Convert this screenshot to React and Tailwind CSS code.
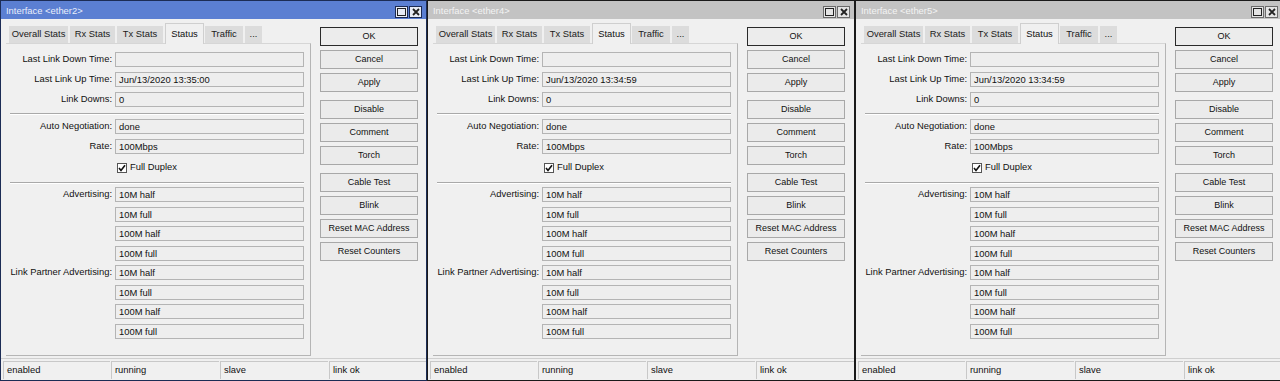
import React from "react";

const windows = [
  { title: "Interface <ether2>", up: "Jun/13/2020 13:35:00", active: true, w: "w-[427px]" },
  { title: "Interface <ether4>", up: "Jun/13/2020 13:34:59", w: "w-[428px]" },
  { title: "Interface <ether5>", up: "Jun/13/2020 13:34:59", w: "w-[428px]" },
];

const tabs = [
  { label: "Overall Stats", cls: "w-[59px] ml-[3px]" },
  { label: "Rx Stats", cls: "w-[45px] ml-[2px]" },
  { label: "Tx Stats", cls: "w-[46px] ml-[2px]" },
  { label: "Status", cls: "w-[39px] ml-[2px]", active: true },
  { label: "Traffic", cls: "w-[38px] ml-[1px]" },
  { label: "...", cls: "w-[17px] ml-[2px]" },
];

const buttons = [
  { label: "OK", def: true },
  { label: "Cancel" },
  { label: "Apply" },
  { label: "Disable", gap: true },
  { label: "Comment" },
  { label: "Torch" },
  { label: "Cable Test", gap: true },
  { label: "Blink" },
  { label: "Reset MAC Address" },
  { label: "Reset Counters" },
];

const speeds = ["10M half", "10M full", "100M half", "100M full"];

function Row({ label, value, className = "" }) {
  return (
    <div className={`flex h-[15px] items-center ${className}`}>
      <div className="w-[106px] text-right whitespace-nowrap">{label}</div>
      <div className="ml-[3px] h-[15px] w-[189px] border border-[#b4b4b4] bg-[#eeeeee] pl-[3px] leading-[13px] whitespace-nowrap">
        {value}
      </div>
    </div>
  );
}

function Sep({ className = "" }) {
  return <div className={`ml-[4px] w-[294px] border-t border-b border-t-[#a9a9a9] border-b-white ${className}`} />;
}

function TitleButtons({ active }) {
  const c = active ? "border-[#1b2a52] bg-[#e8ecf6]" : "border-[#6b6b6b] bg-[#e4e4e4]";
  return (
    <div className="flex gap-[1px]">
      <div className={`flex h-[12px] w-[13px] items-center justify-center border ${c}`}>
        <div className="h-[8px] w-[9px] border border-[#222]" />
      </div>
      <div className={`flex h-[12px] w-[13px] items-center justify-center border ${c}`}>
        <svg width="8" height="8" viewBox="0 0 8 8">
          <path d="M1 1 L7 7 M7 1 L1 7" stroke="#222" strokeWidth="1.8" />
        </svg>
      </div>
    </div>
  );
}

function Window({ title, up, active, w }) {
  return (
    <div
      className={`flex h-[381px] shrink-0 flex-col border bg-[#f0f0f0] ${w} ${
        active ? "border-[#1c2c55]" : "border-[#1a1a1a]"
      }`}
    >
      <div
        className={`flex h-[18px] items-center justify-between pl-[5px] pr-[4px] ${
          active ? "bg-[#5b7fd2] text-[#e9eefb]" : "bg-[#c3c3c3] text-[#f3f3f3]"
        }`}
      >
        <span className="pt-[3px]">{title}</span>
        <div className="pt-[4px]">
          <TitleButtons active={active} />
        </div>
      </div>

      <div className="flex pl-[5px]">
        <div className="w-[305px] pt-[4px]">
          <div className="flex h-[20px] items-end">
            {tabs.map((t) =>
              t.active ? (
                <div
                  key={t.label}
                  className={`relative z-10 -mb-[1px] flex h-[21px] items-start justify-center border border-b-0 border-[#cfcfcf] bg-[#f0f0f0] pt-[3px] ${t.cls}`}
                >
                  {t.label}
                </div>
              ) : (
                <div
                  key={t.label}
                  className={`flex h-[17px] items-center justify-center bg-[#dcdcdc] text-[#1a1a1a] ${t.cls}`}
                >
                  {t.label}
                </div>
              )
            )}
          </div>
          <div className="h-[313px] border-t border-r border-b border-t-[#d6d6d6] border-r-[#b5b5b5] border-b-[#b5b5b5] pt-[7.5px]">
            <Row label="Last Link Down Time:" value="" />
            <Row label="Last Link Up Time:" value={up} className="mt-[5px]" />
            <Row label="Link Downs:" value="0" className="mt-[5px]" />
            <Sep className="mt-[6.5px]" />
            <Row label="Auto Negotiation:" value="done" className="mt-[4px]" />
            <Row label="Rate:" value="100Mbps" className="mt-[5px]" />
            <div className="mt-[7px] flex h-[13px] items-center pl-[111px]">
              <div className="flex h-[10px] w-[10px] items-center justify-center border border-[#555] bg-white">
                <svg width="8" height="8" viewBox="0 0 8 8">
                  <path d="M1 4 L3 6.5 L7 1.2" fill="none" stroke="#111" strokeWidth="1.6" />
                </svg>
              </div>
              <span className="ml-[3px]">Full Duplex</span>
            </div>
            <Sep className="mt-[7.5px]" />
            {speeds.map((s, i) => (
              <Row
                key={"a" + s}
                label={i === 0 ? "Advertising:" : ""}
                value={s}
                className={i === 0 ? "mt-[3.5px]" : "mt-[4.5px]"}
              />
            ))}
            {speeds.map((s, i) => (
              <Row
                key={"p" + s}
                label={i === 0 ? "Link Partner Advertising:" : ""}
                value={s}
                className="mt-[4.5px]"
              />
            ))}
          </div>
        </div>

        <div className="ml-[9px] mt-[8px] w-[98px]">
          {buttons.map((b, i) => (
            <div
              key={b.label}
              className={`flex h-[19px] items-center justify-center whitespace-nowrap text-[9px] ${
                b.def ? "border border-[#2a2a2a] bg-[#ececec]" : "border border-[#a8a8a8] bg-[#ebebeb]"
              } ${i === 0 ? "" : b.gap ? "mt-[8px]" : "mt-[4px]"}`}
            >
              {b.label}
            </div>
          ))}
        </div>
      </div>

      <div className="mt-[2px] flex h-[22px] border-t border-[#cfcfcf] pl-[2px] pt-[2px]">
        {["enabled", "running", "slave", "link ok"].map((s, i) => (
          <div
            key={s}
            className={`flex h-[18px] items-center border-t border-l border-t-[#c8c8c8] border-l-[#c8c8c8] pl-[3px] ${
              i === 3 ? "flex-1" : i === 0 ? "w-[107px]" : "w-[108px]"
            } ${i > 0 ? "ml-[1px]" : ""}`}
          >
            {s}
          </div>
        ))}
      </div>
    </div>
  );
}

export default function App() {
  return (
    <div className="flex h-[381px] w-[1280px] overflow-hidden bg-[#f0f0f0] font-['Liberation_Sans',Arial,sans-serif] text-[9.4px] text-[#111]">
      {windows.map((w) => (
        <Window key={w.title} {...w} />
      ))}
    </div>
  );
}
